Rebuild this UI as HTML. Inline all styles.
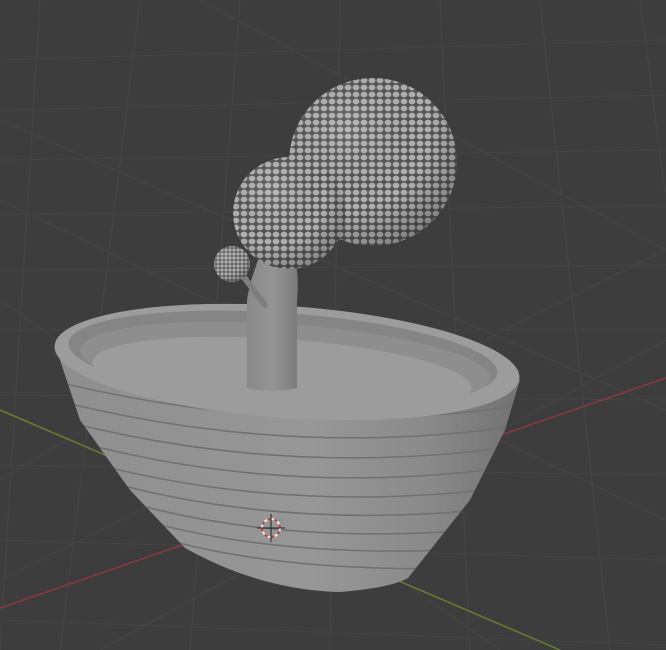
<!DOCTYPE html>
<html><head><meta charset="utf-8"><style>html,body{margin:0;padding:0;background:#3d3d3d;overflow:hidden}svg{display:block}</style></head>
<body>
<svg width="666" height="650" viewBox="0 0 666 650" xmlns="http://www.w3.org/2000/svg">
<defs>
<pattern id="cells" width="8" height="7" patternUnits="userSpaceOnUse">
<rect width="8" height="7" fill="#555"/>
<ellipse cx="4" cy="3.5" rx="3.4" ry="2.9" fill="#b0b0b0"/>
</pattern>
<pattern id="cells2" width="4" height="4" patternUnits="userSpaceOnUse">
<rect width="4" height="4" fill="#666"/>
<circle cx="2" cy="2" r="1.5" fill="#b5b5b5"/>
</pattern>
<radialGradient id="shade" cx="0.35" cy="0.3" r="0.8">
<stop offset="0" stop-color="#fff" stop-opacity="0.12"/>
<stop offset="0.6" stop-color="#000" stop-opacity="0"/>
<stop offset="1" stop-color="#000" stop-opacity="0.3"/>
</radialGradient>
<linearGradient id="potg" x1="0" x2="1" y1="0" y2="0">
<stop offset="0" stop-color="#8e8e8e"/>
<stop offset="0.55" stop-color="#979797"/>
<stop offset="0.8" stop-color="#8a8a8a"/>
<stop offset="1" stop-color="#727272"/>
</linearGradient>
<linearGradient id="stemg" x1="0" x2="1">
<stop offset="0" stop-color="#888"/><stop offset="0.5" stop-color="#959595"/><stop offset="1" stop-color="#7a7a7a"/>
</linearGradient>
<clipPath id="potclip"><path d="M55,345 L80,420 L130,490 L185,548 Q260,590 340,592 Q390,588 408,578 L470,500 L505,430 L520,380 Z"/></clipPath>
</defs>
<rect width="666" height="650" fill="#3d3d3d"/>
<g stroke="#454545" stroke-width="1">
<path d="M0,60 L666,40 M0,110 L666,95 M0,160 L666,150 M0,215 L666,205 M0,270 L666,265 M0,330 L666,330 M0,395 L666,400 M0,465 L666,475 M0,540 L666,560 M0,620 L666,645"/>
<path d="M40,0 L0,650 M140,0 L60,650 M240,0 L190,650 M340,0 L330,650 M440,0 L470,650 M540,0 L610,650 M640,0 L666,200"/>
<path d="M0,200 L666,520 M0,300 L500,650 M0,120 L666,410 M200,0 L666,250 M0,480 L300,300 M0,580 L666,250 M100,650 L666,340"/>
</g>
<line x1="0" y1="608" x2="666" y2="378" stroke="#8a3a40" stroke-width="1.5"/>
<line x1="0" y1="410" x2="560" y2="650" stroke="#6a7d2e" stroke-width="1.5"/>
<path d="M55,345 L80,420 L130,490 L185,548 Q260,590 340,592 Q390,588 408,578 L470,500 L505,430 L520,380 Z" fill="url(#potg)"/>
<g clip-path="url(#potclip)" fill="none" stroke="#707070" stroke-width="1.5">
<path d="M50,380 Q290,440 525,405"/>
<path d="M55,400 Q290,460 525,425"/>
<path d="M60,420 Q290,480 525,445"/>
<path d="M70,440 Q290,500 525,465"/>
<path d="M80,460 Q290,518 525,485"/>
<path d="M95,478 Q290,535 525,505"/>
<path d="M110,497 Q290,552 525,525"/>
<path d="M125,515 Q290,566 525,545"/>
<path d="M140,532 Q290,580 525,565"/>
</g>
<ellipse cx="287" cy="362" rx="233" ry="56" transform="rotate(4 287 362)" fill="#9c9c9c"/>
<ellipse cx="283" cy="358" rx="215" ry="45" transform="rotate(4 283 358)" fill="#858585"/>
<ellipse cx="285" cy="364" rx="205" ry="40" transform="rotate(4 285 364)" fill="#8e8e8e"/>
<ellipse cx="282" cy="375" rx="190" ry="36" transform="rotate(4 282 375)" fill="#9c9c9c"/>
<path d="M247,300 L247,388 Q272,394 297,388 L297,300 Q300,270 292,250 L260,255 Q250,280 247,300 Z" fill="url(#stemg)"/>
<line x1="240" y1="272" x2="265" y2="305" stroke="#7e7e7e" stroke-width="6" stroke-linecap="round"/>
<circle cx="232" cy="264" r="18" fill="url(#cells2)"/>
<circle cx="232" cy="264" r="18" fill="url(#shade)"/>
<circle cx="373" cy="162" r="84" fill="url(#cells)"/>
<circle cx="373" cy="162" r="84" fill="url(#shade)"/>
<circle cx="289" cy="213" r="56" fill="url(#cells)"/>
<circle cx="289" cy="213" r="56" fill="url(#shade)"/>
<circle cx="271" cy="528" r="9" fill="none" stroke="#e8e8e8" stroke-width="2" stroke-dasharray="4 3"/>
<circle cx="271" cy="528" r="9" fill="none" stroke="#c04040" stroke-width="2" stroke-dasharray="3 4" stroke-dashoffset="3.5"/>
<path d="M271,514 V542 M257,528 H285" stroke="#222" stroke-width="1"/>
</svg>
</body></html>
